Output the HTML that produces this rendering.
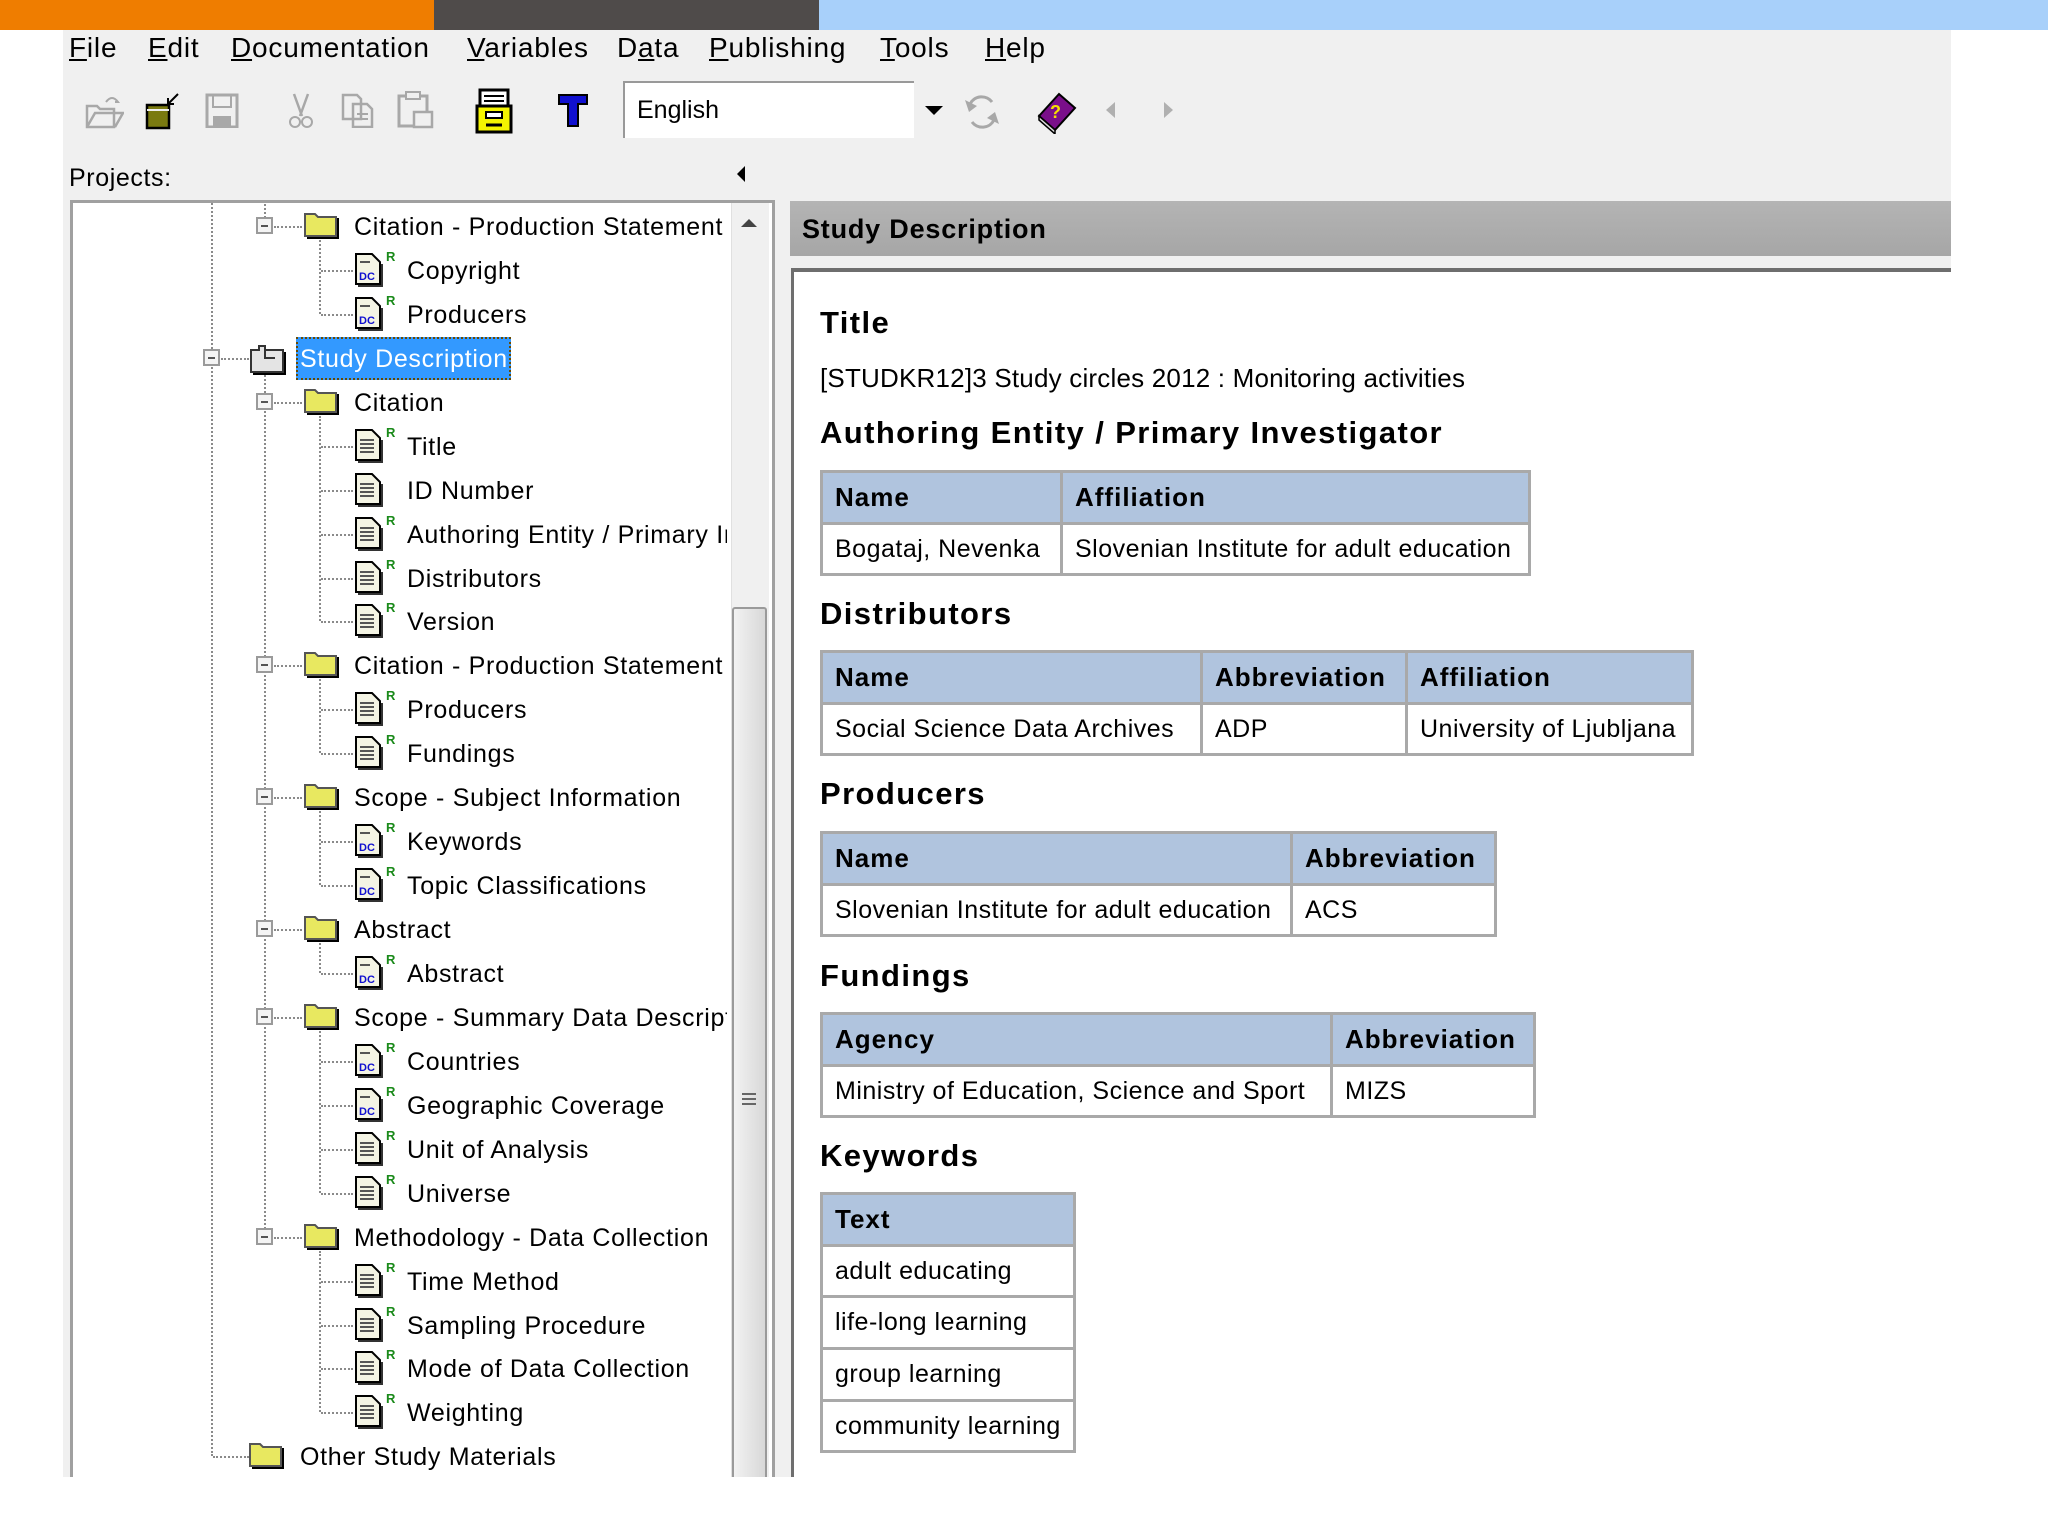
<!DOCTYPE html>
<html><head><meta charset="utf-8">
<style>
*{margin:0;padding:0;box-sizing:border-box}
body{width:2048px;height:1536px;background:#fff;position:relative;overflow:hidden;font-family:"Liberation Sans",Arial,sans-serif;color:#000}
.a{position:absolute}
.menu span{position:absolute;top:30px;font-size:28px;line-height:36px;letter-spacing:0.8px}
.menu u{text-decoration:underline}
.row{position:absolute;height:44px;line-height:46px;font-size:25px;letter-spacing:0.7px;white-space:nowrap}
.dv{position:absolute;border-left:2px dotted #8a8a8a;width:0}
.dh{position:absolute;border-top:2px dotted #8a8a8a;height:0}
.mb{position:absolute;width:17px;height:17px;border:2px solid #9a9a9a;background:#f4f4f4}
.mb:after{content:"";position:absolute;left:3px;top:6px;width:7px;height:2px;background:#555}
.R{position:absolute;color:#1a8a1a;font-size:13px;font-weight:bold;line-height:13px}
h2{position:absolute;left:820px;font-size:31px;letter-spacing:1.4px;font-weight:bold;line-height:36px}
table{position:absolute;left:820px;border-collapse:collapse;border:3px solid #a9a9a9;font-size:25px;letter-spacing:0.5px;background:#fff}
td,th{border:3px solid #a9a9a9;height:51.7px;padding:0 12px;text-align:left;white-space:nowrap}
th{background:#b0c4de;font-weight:bold;font-size:26px;letter-spacing:1px}
</style></head><body>
<svg width="0" height="0" style="position:absolute">
<defs>
<g id="fold"><path d="M2 6 h10 l3 3 h18 v19 h-31z" fill="#e8e860" stroke="#555" stroke-width="2"/><path d="M4 30 h31 v-20" fill="none" stroke="#000" stroke-width="2"/></g>
<g id="doc"><path d="M2 2 h16 l8 8 v22 h-24z" fill="#f4f4e4" stroke="#000" stroke-width="2"/><path d="M6 12h14M6 16h14M6 20h14M6 24h14" stroke="#555" stroke-width="2"/><path d="M4 34 h24 v-22" fill="none" stroke="#333" stroke-width="2"/></g>
<g id="dc"><path d="M2 2 h16 l8 8 v22 h-24z" fill="#f4f4e4" stroke="#000" stroke-width="2"/><path d="M6 10h10" stroke="#555" stroke-width="2"/><text x="5" y="28" font-family="Liberation Sans" font-size="11" font-weight="bold" fill="#1010d0">DC</text><path d="M4 34 h24 v-22" fill="none" stroke="#333" stroke-width="2"/></g>
</defs></svg>

<div class="a" style="left:0;top:0;width:434px;height:30px;background:#ef7d00"></div>
<div class="a" style="left:434px;top:0;width:385px;height:30px;background:#4f4b4a"></div>
<div class="a" style="left:819px;top:0;width:1229px;height:30px;background:#a8d0fa"></div>
<div class="a" style="left:63px;top:30px;width:1888px;height:1447px;background:#f0f0f0"></div>

<div class="menu">
<span style="left:69px"><u>F</u>ile</span>
<span style="left:148px"><u>E</u>dit</span>
<span style="left:231px"><u>D</u>ocumentation</span>
<span style="left:467px"><u>V</u>ariables</span>
<span style="left:617px">D<u>a</u>ta</span>
<span style="left:709px"><u>P</u>ublishing</span>
<span style="left:880px"><u>T</u>ools</span>
<span style="left:985px"><u>H</u>elp</span>
</div>

<svg class="a" style="left:84px;top:92px" width="40" height="40"><path d="M3 14h10l3 3h14v18H3z M3 35 l8-14 h28 l-8 14" fill="none" stroke="#a8a8a8" stroke-width="2.5"/><path d="M22 10 q6-8 12 0 l-3 0" fill="none" stroke="#a8a8a8" stroke-width="2"/></svg>
<svg class="a" style="left:144px;top:90px" width="40" height="40"><rect x="3" y="15" width="22" height="23" fill="#7a7a10" stroke="#000" stroke-width="2.5"/><path d="M3 20h22" stroke="#eee" stroke-width="2"/><path d="M24 14 l10-10 M24 14 v-6 M24 14 h6" stroke="#000" stroke-width="2"/></svg>
<svg class="a" style="left:204px;top:92px" width="36" height="36"><rect x="3" y="3" width="30" height="32" fill="none" stroke="#a8a8a8" stroke-width="3"/><rect x="9" y="3" width="18" height="12" fill="none" stroke="#a8a8a8" stroke-width="2"/><rect x="9" y="24" width="18" height="11" fill="#a8a8a8"/></svg>
<svg class="a" style="left:288px;top:92px" width="26" height="38"><path d="M6 2 l8 22 M20 2 l-8 22" stroke="#a8a8a8" stroke-width="2.5"/><circle cx="7" cy="30" r="5" fill="none" stroke="#a8a8a8" stroke-width="2"/><circle cx="19" cy="30" r="5" fill="none" stroke="#a8a8a8" stroke-width="2"/></svg>
<svg class="a" style="left:340px;top:92px" width="36" height="36"><path d="M3 3h14l4 4v20H3z M13 12h14l5 5v18H13z" fill="#f0f0f0" stroke="#a8a8a8" stroke-width="2.5"/><path d="M17 22h11M17 27h11" stroke="#a8a8a8" stroke-width="2"/></svg>
<svg class="a" style="left:396px;top:90px" width="40" height="40"><path d="M3 6h28v30H3z" fill="none" stroke="#a8a8a8" stroke-width="3"/><rect x="10" y="2" width="14" height="7" fill="#f0f0f0" stroke="#a8a8a8" stroke-width="2"/><rect x="18" y="22" width="18" height="15" fill="#f0f0f0" stroke="#a8a8a8" stroke-width="2.5"/></svg>
<svg class="a" style="left:474px;top:88px" width="40" height="46"><rect x="6" y="2" width="28" height="16" fill="#fff" stroke="#000" stroke-width="3"/><path d="M10 8h20M10 13h20" stroke="#000" stroke-width="2"/><rect x="3" y="18" width="34" height="26" fill="#f5f500" stroke="#000" stroke-width="3"/><rect x="12" y="24" width="16" height="6" fill="#fff" stroke="#000" stroke-width="2"/><path d="M12 37h16" stroke="#000" stroke-width="3"/></svg>
<svg class="a" style="left:556px;top:92px" width="34" height="36"><path d="M3 3h28v9h-9v22h-10v-22H3z" fill="#1010d0" stroke="#000" stroke-width="2"/></svg>
<div class="a" style="left:623px;top:81px;width:291px;height:57px;background:#fff;border-top:2px solid #999;border-left:2px solid #999;font-size:25px;line-height:54px;padding-left:12px">English</div>
<div class="a" style="left:925px;top:106px;width:0;height:0;border-left:9px solid transparent;border-right:9px solid transparent;border-top:9px solid #000"></div>
<svg class="a" style="left:962px;top:92px" width="40" height="40"><path d="M30 10 a13 13 0 0 0-22 2 M10 30 a13 13 0 0 0 22-2" fill="none" stroke="#a8a8a8" stroke-width="3"/><path d="M3 8 l4 12 l8-6z M37 32 l-4-12 l-8 6z" fill="#a8a8a8"/></svg>
<svg class="a" style="left:1035px;top:90px" width="44" height="44"><path d="M4 26 l20-22 l16 14 l-20 22z" fill="#7a0f8a" stroke="#000" stroke-width="2"/><path d="M4 26 l16 14 l0 4 l-16-14z" fill="#ddd" stroke="#000" stroke-width="1.5"/><text x="15" y="28" font-family="Liberation Sans" font-weight="bold" font-size="18" fill="#f5e000">?</text></svg>
<div class="a" style="left:1106px;top:102px;width:0;height:0;border-top:8px solid transparent;border-bottom:8px solid transparent;border-right:9px solid #b0b0b0"></div>
<div class="a" style="left:1164px;top:102px;width:0;height:0;border-top:8px solid transparent;border-bottom:8px solid transparent;border-left:9px solid #b0b0b0"></div>

<div class="a" style="left:69px;top:162px;font-size:25px;letter-spacing:0.6px;line-height:32px">Projects:</div>
<div class="a" style="left:737px;top:166px;width:0;height:0;border-top:8px solid transparent;border-bottom:8px solid transparent;border-right:8px solid #000"></div>

<div class="a" style="left:70px;top:200px;width:705px;height:1277px;background:#fff;border-left:3px solid #a0a0a0;border-top:3px solid #a0a0a0;border-right:3px solid #a0a0a0;overflow:hidden">
<div class="a" style="left:658px;top:0;width:38px;height:1280px;background:#f0f0f0;border-left:1px solid #e0e0e0"></div>
<div class="a" style="left:668px;top:16px;width:0;height:0;border-left:8px solid transparent;border-right:8px solid transparent;border-bottom:8px solid #444"></div>
<div class="a" style="left:659px;top:404px;width:35px;height:880px;background:linear-gradient(90deg,#f2f2f2,#d8d8d8);border:2px solid #9a9a9a;border-radius:3px"></div>
<div class="a" style="left:669px;top:890px;width:14px;height:2px;background:#666;box-shadow:0 5px 0 #666,0 10px 0 #666"></div>
</div>

<div class="a" style="left:73px;top:203px;width:654px;height:1274px;overflow:hidden">
<div style="position:absolute;left:-73px;top:-203px;width:900px;height:1600px">
<div class="dv" style="left:211px;top:200px;height:1256px"></div>
<div class="dv" style="left:264px;top:200px;height:26px"></div>
<div class="dv" style="left:264px;top:372px;height:865px"></div>
<div class="dv" style="left:319px;top:240px;height:74px"></div>
<div class="dv" style="left:319px;top:416px;height:205px"></div>
<div class="dv" style="left:319px;top:679px;height:74px"></div>
<div class="dv" style="left:319px;top:811px;height:74px"></div>
<div class="dv" style="left:319px;top:943px;height:30px"></div>
<div class="dv" style="left:319px;top:1031px;height:162px"></div>
<div class="dv" style="left:319px;top:1251px;height:161px"></div>

<div class="mb" style="left:256px;top:217px"></div><div class="dh" style="left:274px;top:226px;width:28px"></div><svg class="a" style="left:303px;top:208px" width="38" height="34"><use href="#fold"/></svg><div class="row" style="left:354px;top:204px">Citation - Production Statement</div>
<div class="mb" style="left:256px;top:393px"></div><div class="dh" style="left:274px;top:402px;width:28px"></div><svg class="a" style="left:303px;top:384px" width="38" height="34"><use href="#fold"/></svg><div class="row" style="left:354px;top:380px">Citation</div>
<div class="mb" style="left:256px;top:656px"></div><div class="dh" style="left:274px;top:665px;width:28px"></div><svg class="a" style="left:303px;top:647px" width="38" height="34"><use href="#fold"/></svg><div class="row" style="left:354px;top:643px">Citation - Production Statement</div>
<div class="mb" style="left:256px;top:788px"></div><div class="dh" style="left:274px;top:797px;width:28px"></div><svg class="a" style="left:303px;top:779px" width="38" height="34"><use href="#fold"/></svg><div class="row" style="left:354px;top:775px">Scope - Subject Information</div>
<div class="mb" style="left:256px;top:920px"></div><div class="dh" style="left:274px;top:929px;width:28px"></div><svg class="a" style="left:303px;top:911px" width="38" height="34"><use href="#fold"/></svg><div class="row" style="left:354px;top:907px">Abstract</div>
<div class="mb" style="left:256px;top:1008px"></div><div class="dh" style="left:274px;top:1017px;width:28px"></div><svg class="a" style="left:303px;top:999px" width="38" height="34"><use href="#fold"/></svg><div class="row" style="left:354px;top:995px">Scope - Summary Data Description</div>
<div class="mb" style="left:256px;top:1228px"></div><div class="dh" style="left:274px;top:1237px;width:28px"></div><svg class="a" style="left:303px;top:1219px" width="38" height="34"><use href="#fold"/></svg><div class="row" style="left:354px;top:1215px">Methodology - Data Collection</div>

<div class="mb" style="left:203px;top:349px"></div><div class="dh" style="left:221px;top:358px;width:28px"></div>
<svg class="a" style="left:248px;top:342px" width="40" height="34"><path d="M3 8h8v-4h6v4h18v22H3z" fill="#e4e4e4" stroke="#333" stroke-width="2"/><path d="M17 8v8h10" fill="none" stroke="#333" stroke-width="2"/><path d="M5 32h32v-22" fill="none" stroke="#000" stroke-width="2"/></svg>
<div class="a" style="left:296px;top:337px;width:215px;height:43px;background:#3399ff;border:2px dotted #6a4a00"></div>
<div class="row" style="left:300px;top:336px;color:#fff">Study Description</div>

<div class="dh" style="left:213px;top:1456px;width:36px"></div><svg class="a" style="left:248px;top:1438px" width="38" height="34"><use href="#fold"/></svg><div class="row" style="left:300px;top:1434px">Other Study Materials</div>

<div class="dh" style="left:321px;top:270px;width:32px"></div><svg class="a" style="left:354px;top:252px" width="30" height="36"><use href="#dc"/></svg><span class="R" style="left:386px;top:250px">R</span><div class="row" style="left:407px;top:248px">Copyright</div>
<div class="dh" style="left:321px;top:314px;width:32px"></div><svg class="a" style="left:354px;top:296px" width="30" height="36"><use href="#dc"/></svg><span class="R" style="left:386px;top:294px">R</span><div class="row" style="left:407px;top:292px">Producers</div>
<div class="dh" style="left:321px;top:446px;width:32px"></div><svg class="a" style="left:354px;top:428px" width="30" height="36"><use href="#doc"/></svg><span class="R" style="left:386px;top:426px">R</span><div class="row" style="left:407px;top:424px">Title</div>
<div class="dh" style="left:321px;top:490px;width:32px"></div><svg class="a" style="left:354px;top:472px" width="30" height="36"><use href="#doc"/></svg><div class="row" style="left:407px;top:468px">ID Number</div>
<div class="dh" style="left:321px;top:534px;width:32px"></div><svg class="a" style="left:354px;top:516px" width="30" height="36"><use href="#doc"/></svg><span class="R" style="left:386px;top:514px">R</span><div class="row" style="left:407px;top:512px">Authoring Entity / Primary Investigator</div>
<div class="dh" style="left:321px;top:578px;width:32px"></div><svg class="a" style="left:354px;top:560px" width="30" height="36"><use href="#doc"/></svg><span class="R" style="left:386px;top:558px">R</span><div class="row" style="left:407px;top:556px">Distributors</div>
<div class="dh" style="left:321px;top:621px;width:32px"></div><svg class="a" style="left:354px;top:603px" width="30" height="36"><use href="#doc"/></svg><span class="R" style="left:386px;top:601px">R</span><div class="row" style="left:407px;top:599px">Version</div>
<div class="dh" style="left:321px;top:709px;width:32px"></div><svg class="a" style="left:354px;top:691px" width="30" height="36"><use href="#doc"/></svg><span class="R" style="left:386px;top:689px">R</span><div class="row" style="left:407px;top:687px">Producers</div>
<div class="dh" style="left:321px;top:753px;width:32px"></div><svg class="a" style="left:354px;top:735px" width="30" height="36"><use href="#doc"/></svg><span class="R" style="left:386px;top:733px">R</span><div class="row" style="left:407px;top:731px">Fundings</div>
<div class="dh" style="left:321px;top:841px;width:32px"></div><svg class="a" style="left:354px;top:823px" width="30" height="36"><use href="#dc"/></svg><span class="R" style="left:386px;top:821px">R</span><div class="row" style="left:407px;top:819px">Keywords</div>
<div class="dh" style="left:321px;top:885px;width:32px"></div><svg class="a" style="left:354px;top:867px" width="30" height="36"><use href="#dc"/></svg><span class="R" style="left:386px;top:865px">R</span><div class="row" style="left:407px;top:863px">Topic Classifications</div>
<div class="dh" style="left:321px;top:973px;width:32px"></div><svg class="a" style="left:354px;top:955px" width="30" height="36"><use href="#dc"/></svg><span class="R" style="left:386px;top:953px">R</span><div class="row" style="left:407px;top:951px">Abstract</div>
<div class="dh" style="left:321px;top:1061px;width:32px"></div><svg class="a" style="left:354px;top:1043px" width="30" height="36"><use href="#dc"/></svg><span class="R" style="left:386px;top:1041px">R</span><div class="row" style="left:407px;top:1039px">Countries</div>
<div class="dh" style="left:321px;top:1105px;width:32px"></div><svg class="a" style="left:354px;top:1087px" width="30" height="36"><use href="#dc"/></svg><span class="R" style="left:386px;top:1085px">R</span><div class="row" style="left:407px;top:1083px">Geographic Coverage</div>
<div class="dh" style="left:321px;top:1149px;width:32px"></div><svg class="a" style="left:354px;top:1131px" width="30" height="36"><use href="#doc"/></svg><span class="R" style="left:386px;top:1129px">R</span><div class="row" style="left:407px;top:1127px">Unit of Analysis</div>
<div class="dh" style="left:321px;top:1193px;width:32px"></div><svg class="a" style="left:354px;top:1175px" width="30" height="36"><use href="#doc"/></svg><span class="R" style="left:386px;top:1173px">R</span><div class="row" style="left:407px;top:1171px">Universe</div>
<div class="dh" style="left:321px;top:1281px;width:32px"></div><svg class="a" style="left:354px;top:1263px" width="30" height="36"><use href="#doc"/></svg><span class="R" style="left:386px;top:1261px">R</span><div class="row" style="left:407px;top:1259px">Time Method</div>
<div class="dh" style="left:321px;top:1325px;width:32px"></div><svg class="a" style="left:354px;top:1307px" width="30" height="36"><use href="#doc"/></svg><span class="R" style="left:386px;top:1305px">R</span><div class="row" style="left:407px;top:1303px">Sampling Procedure</div>
<div class="dh" style="left:321px;top:1368px;width:32px"></div><svg class="a" style="left:354px;top:1350px" width="30" height="36"><use href="#doc"/></svg><span class="R" style="left:386px;top:1348px">R</span><div class="row" style="left:407px;top:1346px">Mode of Data Collection</div>
<div class="dh" style="left:321px;top:1412px;width:32px"></div><svg class="a" style="left:354px;top:1394px" width="30" height="36"><use href="#doc"/></svg><span class="R" style="left:386px;top:1392px">R</span><div class="row" style="left:407px;top:1390px">Weighting</div>
</div></div>

<div class="a" style="left:790px;top:201px;width:1161px;height:55px;background:linear-gradient(180deg,#b4b4b4,#a6a6a6);font-weight:bold;font-size:27px;letter-spacing:0.8px;line-height:57px;padding-left:12px">Study Description</div>
<div class="a" style="left:791px;top:268px;width:1160px;height:1209px;background:#fff;border-top:4px solid #6e6e6e;border-left:3px solid #6e6e6e"></div>

<h2 style="top:305px">Title</h2>
<div class="a" style="left:820px;top:362px;font-size:26px;letter-spacing:0.2px;line-height:32px">[STUDKR12]3 Study circles 2012 : Monitoring activities</div>
<h2 style="top:415px">Authoring Entity / Primary Investigator</h2>
<table style="top:470px;width:711px"><tr><th style="width:240px">Name</th><th>Affiliation</th></tr><tr><td>Bogataj, Nevenka</td><td>Slovenian Institute for adult education</td></tr></table>
<h2 style="top:596px">Distributors</h2>
<table style="top:650px;width:874px"><tr><th style="width:380px">Name</th><th style="width:205px">Abbreviation</th><th>Affiliation</th></tr><tr><td>Social Science Data Archives</td><td>ADP</td><td>University of Ljubljana</td></tr></table>
<h2 style="top:776px">Producers</h2>
<table style="top:831px;width:677px"><tr><th style="width:470px">Name</th><th>Abbreviation</th></tr><tr><td>Slovenian Institute for adult education</td><td>ACS</td></tr></table>
<h2 style="top:958px">Fundings</h2>
<table style="top:1012px;width:716px"><tr><th style="width:510px">Agency</th><th>Abbreviation</th></tr><tr><td>Ministry of Education, Science and Sport</td><td>MIZS</td></tr></table>
<h2 style="top:1138px">Keywords</h2>
<table style="top:1192px;width:256px"><tr><th>Text</th></tr><tr><td>adult educating</td></tr><tr><td>life-long learning</td></tr><tr><td>group learning</td></tr><tr><td>community learning</td></tr></table>

<div class="a" style="left:0;top:1477px;width:2048px;height:59px;background:#fff"></div>
</body></html>
